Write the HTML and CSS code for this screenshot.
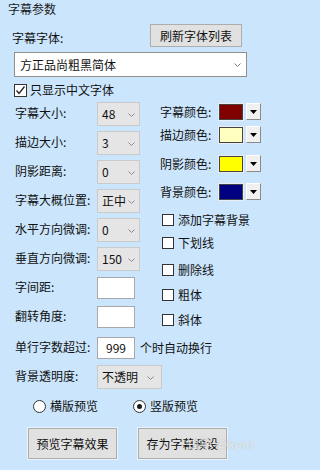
FILE: index.html
```html
<!DOCTYPE html>
<html lang="zh-CN">
<head>
<meta charset="utf-8">
<title>字幕参数</title>
<link rel="stylesheet" href="styles.css">
</head>
<body>
<div class="panel">
  <div class="title">字幕参数</div>

  <div class="font-head">
    <span class="head-label">字幕字体:</span>
    <button class="btn btn-refresh">刷新字体列表</button>
  </div>

  <div class="font-combo">
    <span>方正品尚粗黑简体</span>
    <svg class="chev" width="7" height="4" viewBox="0 0 7 4"><polyline points="0.5,0.5 3.5,3.5 6.5,0.5" fill="none" stroke="#7a7a7a" stroke-width="1"/></svg>
  </div>

  <div class="check check-cn">
    <span class="box box-lg"><svg width="11" height="11" viewBox="0 0 11 11"><polyline points="1.5,5.5 4,8.5 9.5,1.5" fill="none" stroke="#222" stroke-width="1.3"/></svg></span>
    <span>只显示中文字体</span>
  </div>

  <div class="main">
    <div class="left">
      <div class="row"><span class="lbl">字幕大小:</span><span class="combo"><span class="cval">48</span><svg class="chev" width="7" height="4" viewBox="0 0 7 4"><polyline points="0.5,0.5 3.5,3.5 6.5,0.5" fill="none" stroke="#8a8a8a" stroke-width="1"/></svg></span></div>
      <div class="row"><span class="lbl">描边大小:</span><span class="combo"><span class="cval">3</span><svg class="chev" width="7" height="4" viewBox="0 0 7 4"><polyline points="0.5,0.5 3.5,3.5 6.5,0.5" fill="none" stroke="#8a8a8a" stroke-width="1"/></svg></span></div>
      <div class="row"><span class="lbl">阴影距离:</span><span class="combo"><span class="cval">0</span><svg class="chev" width="7" height="4" viewBox="0 0 7 4"><polyline points="0.5,0.5 3.5,3.5 6.5,0.5" fill="none" stroke="#8a8a8a" stroke-width="1"/></svg></span></div>
      <div class="row"><span class="lbl">字幕大概位置:</span><span class="combo"><span class="cval cval-clip">正中</span><svg class="chev" width="7" height="4" viewBox="0 0 7 4"><polyline points="0.5,0.5 3.5,3.5 6.5,0.5" fill="none" stroke="#8a8a8a" stroke-width="1"/></svg></span></div>
      <div class="row"><span class="lbl">水平方向微调:</span><span class="combo"><span class="cval">0</span><svg class="chev" width="7" height="4" viewBox="0 0 7 4"><polyline points="0.5,0.5 3.5,3.5 6.5,0.5" fill="none" stroke="#8a8a8a" stroke-width="1"/></svg></span></div>
      <div class="row"><span class="lbl">垂直方向微调:</span><span class="combo"><span class="cval">150</span><svg class="chev" width="7" height="4" viewBox="0 0 7 4"><polyline points="0.5,0.5 3.5,3.5 6.5,0.5" fill="none" stroke="#8a8a8a" stroke-width="1"/></svg></span></div>
      <div class="row"><span class="lbl">字间距:</span><span class="tbox"></span></div>
      <div class="row"><span class="lbl">翻转角度:</span><span class="tbox"></span></div>
      <div class="row row-wrap"><span class="lbl">单行字数超过:</span><span class="tbox tbox-val">999</span><span class="after">个时自动换行</span></div>
      <div class="row"><span class="lbl">背景透明度:</span><span class="combo combo-wide"><span class="cval">不透明</span><svg class="chev" width="7" height="4" viewBox="0 0 7 4"><polyline points="0.5,0.5 3.5,3.5 6.5,0.5" fill="none" stroke="#8a8a8a" stroke-width="1"/></svg></span></div>
    </div>

    <div class="right">
      <div class="crow crow-1"><span class="clbl">字幕颜色:</span><span class="cpick"><span class="swatch sw-red"></span><span class="cbtn"><svg width="7" height="4" viewBox="0 0 7 4"><polygon points="0,0 7,0 3.5,4" fill="#000"/></svg></span></span></div>
      <div class="crow crow-2"><span class="clbl">描边颜色:</span><span class="cpick"><span class="swatch sw-cream"></span><span class="cbtn"><svg width="7" height="4" viewBox="0 0 7 4"><polygon points="0,0 7,0 3.5,4" fill="#000"/></svg></span></span></div>
      <div class="crow crow-3"><span class="clbl">阴影颜色:</span><span class="cpick"><span class="swatch sw-yellow"></span><span class="cbtn"><svg width="7" height="4" viewBox="0 0 7 4"><polygon points="0,0 7,0 3.5,4" fill="#000"/></svg></span></span></div>
      <div class="crow crow-4"><span class="clbl">背景颜色:</span><span class="cpick"><span class="swatch sw-navy"></span><span class="cbtn"><svg width="7" height="4" viewBox="0 0 7 4"><polygon points="0,0 7,0 3.5,4" fill="#000"/></svg></span></span></div>

      <div class="check rcheck rc-1"><span class="box"></span><span>添加字幕背景</span></div>
      <div class="check rcheck rc-2"><span class="box"></span><span>下划线</span></div>
      <div class="check rcheck rc-3"><span class="box"></span><span>删除线</span></div>
      <div class="check rcheck rc-4"><span class="box"></span><span>粗体</span></div>
      <div class="check rcheck rc-5"><span class="box"></span><span>斜体</span></div>
    </div>
  </div>

  <div class="radios">
    <div class="radio"><span class="rdot"></span><span>横版预览</span></div>
    <div class="radio"><span class="rdot on"></span><span>竖版预览</span></div>
  </div>

  <div class="actions">
    <button class="btn btn-big">预览字幕效果</button>
    <button class="btn btn-big">存为字幕预设</button>
  </div>

  <div class="watermark">知乎 @kent</div>
</div>
</body>
</html>
```

FILE: styles.css
```css
* { box-sizing: border-box; }

html, body {
  margin: 0;
  padding: 0;
}

body {
  width: 266px;
  height: 470px;
  background: #cbe6fc;
  font-family: "Noto Sans CJK SC", "Microsoft YaHei", sans-serif;
  font-size: 12px;
  color: #111;
  overflow: hidden;
}

.panel {
  position: relative;
  width: 266px;
  height: 470px;
}

.title {
  height: 18px;
  line-height: 18px;
  padding-left: 8px;
  color: #1a1a1a;
}

.font-head {
  display: flex;
  align-items: center;
  margin-top: 6px;
  padding-left: 12px;
  padding-right: 24px;
  height: 23px;
}

.head-label {
  line-height: 16px;
  margin-top: 4px;
}

.btn {
  font-family: inherit;
  font-size: 12px;
  color: #111;
  background: #e1e1e1;
  border: 1px solid #adadad;
  padding: 0;
  margin: 0;
  line-height: 16px;
}

.btn-refresh {
  margin-left: auto;
  width: 92px;
  height: 23px;
}

.font-combo {
  display: flex;
  align-items: center;
  justify-content: space-between;
  margin: 5px 19px 0 14px;
  height: 25px;
  background: #fff;
  border: 1px solid #8f8f8f;
  padding: 0 5px 0 5px;
  line-height: 16px;
}

.chev { display: block; flex: none; }

.check {
  display: flex;
  align-items: center;
  line-height: 14px;
}

.check-cn {
  margin-top: 6px;
  margin-left: 14px;
  height: 14px;
}

.box {
  display: inline-flex;
  align-items: center;
  justify-content: center;
  width: 12px;
  height: 12px;
  background: #fff;
  border: 1px solid #333;
  margin-right: 3px;
  flex: none;
}

.box-lg {
  width: 13px;
  height: 13px;
}

.main {
  display: flex;
  margin-top: 5px;
}

.left {
  width: 160px;
  padding-left: 15px;
  display: flex;
  flex-direction: column;
  gap: 5px;
}

.row {
  display: flex;
  align-items: center;
  height: 24px;
}

.row-wrap { margin-top: 2px; }

.lbl {
  width: 82px;
  flex: none;
  line-height: 16px;
  margin-top: -2px;
}

.combo {
  display: flex;
  align-items: center;
  justify-content: space-between;
  width: 43px;
  height: 24px;
  background: #e5e5e5;
  border: 1px solid #cacaca;
  padding: 0 4px 0 4px;
  overflow: hidden;
  flex: none;
}

.combo-wide { width: 65px; padding-right: 7px; }

.cval {
  line-height: 16px;
  white-space: nowrap;
}

.cval-clip { margin-right: -6px; }

.combo .chev { margin-top: 1px; }

.tbox {
  width: 38px;
  height: 22px;
  background: #fff;
  border: 1px solid #a8a8a8;
  flex: none;
  line-height: 20px;
  text-align: center;
}

.after {
  margin-left: 5px;
  line-height: 16px;
  white-space: nowrap;
}

.right {
  flex: 1;
  display: flex;
  flex-direction: column;
}

.crow {
  display: flex;
  align-items: center;
  height: 17px;
}

.crow-1 { margin-top: 1px; }
.crow-2 { margin-top: 6px; }
.crow-3 { margin-top: 12px; }
.crow-4 { margin-top: 11px; }

.clbl {
  width: 59px;
  flex: none;
  line-height: 16px;
  white-space: nowrap;
}

.cpick {
  display: flex;
  align-items: center;
  gap: 3px;
  height: 17px;
}

.swatch {
  width: 24px;
  height: 16px;
  border: 1px solid #444;
  box-shadow: 0 0 0 1px #e8eef4;
}

.sw-red { background: #800000; }
.sw-cream { background: #ffffc0; }
.sw-yellow { background: #ffff00; }
.sw-navy { background: #000080; }

.cbtn {
  display: flex;
  align-items: center;
  justify-content: center;
  width: 15px;
  height: 17px;
  background: #f0f0f0;
  border-top: 1px solid #fff;
  border-left: 1px solid #fff;
  border-right: 1px solid #8a8a8a;
  border-bottom: 1px solid #8a8a8a;
}

.rcheck {
  height: 13px;
  padding-left: 2px;
}

.rcheck .box { margin-right: 4px; }

.rc-1 { margin-top: 13px; }
.rc-2 { margin-top: 10px; }
.rc-3 { margin-top: 14px; }
.rc-4 { margin-top: 12px; }
.rc-5 { margin-top: 12px; }

.radios {
  display: flex;
  margin-top: 10px;
  padding-left: 33px;
  height: 14px;
}

.radio {
  display: flex;
  align-items: center;
  width: 100px;
  line-height: 14px;
}

.rdot {
  display: inline-flex;
  align-items: center;
  justify-content: center;
  width: 13px;
  height: 13px;
  border-radius: 50%;
  background: #fff;
  border: 1px solid #333;
  margin-right: 4px;
}

.rdot.on::after {
  content: "";
  width: 5px;
  height: 5px;
  border-radius: 50%;
  background: #1a1a1a;
}

.actions {
  display: flex;
  gap: 21px;
  margin-top: 15px;
  padding-left: 28px;
}

.btn-big {
  width: 89px;
  height: 31px;
  box-shadow: 0 0 0 1px #e9f3fb;
}

.watermark {
  position: absolute;
  left: 186px;
  top: 436px;
  font-size: 13px;
  line-height: 16px;
  color: rgba(255, 255, 255, 0.7);
  text-shadow: 0 0 1px rgba(120, 120, 120, 0.5);
  white-space: nowrap;
}
```
